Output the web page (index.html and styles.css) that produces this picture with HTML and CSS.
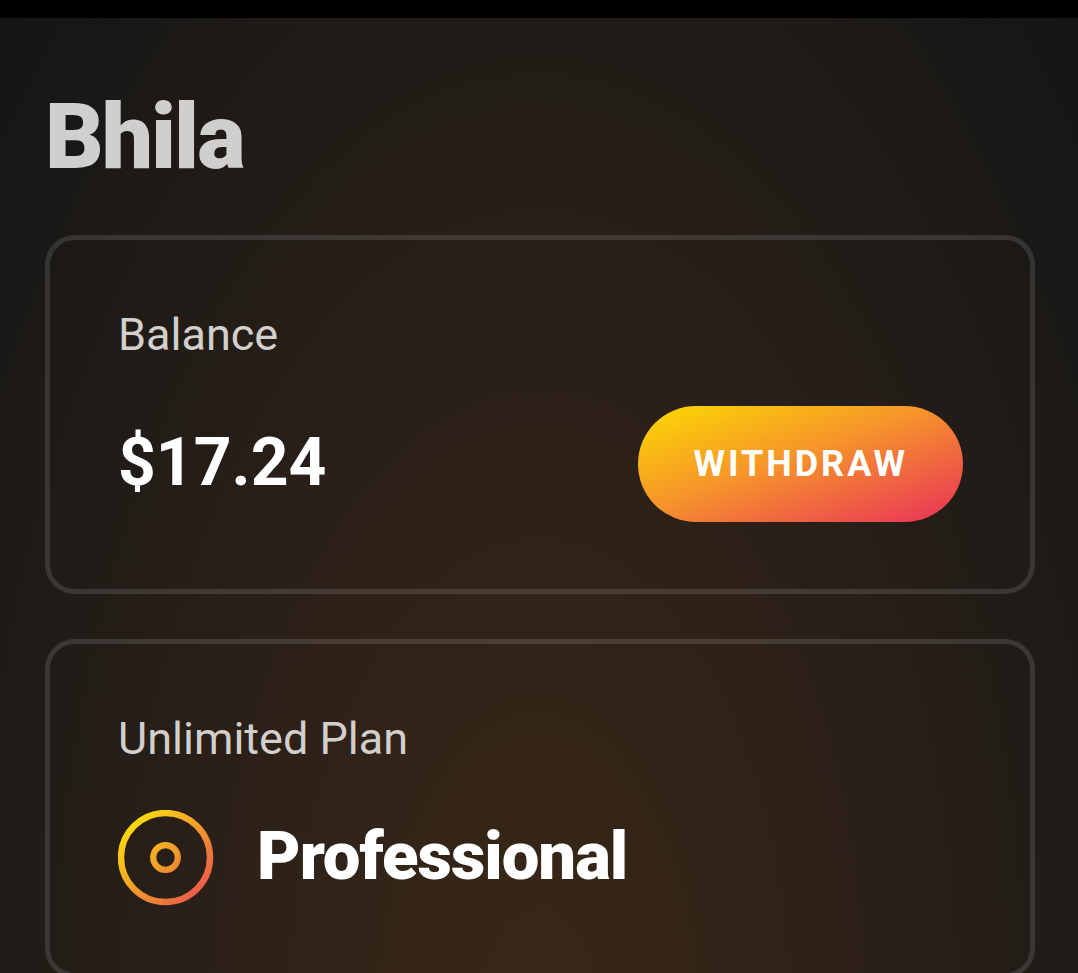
FILE: index.html
```html
<!DOCTYPE html>
<html lang="en">
<head>
    <meta charset="UTF-8">
    <meta name="viewport" content="width=device-width, initial-scale=1.0">
    <title>Bhila</title>
    <link rel="stylesheet" href="styles.css">
</head>
<body>

    <main class="dashboard">
        <h1 class="page-title">Bhila</h1>

        <section class="card">
            <h2 class="card-label">Balance</h2>
            <div class="balance-row">
                <p class="amount">$17.24</p>
                <button type="button" class="withdraw-button">Withdraw</button>
            </div>
        </section>

        <section class="card">
            <h2 class="card-label">Unlimited Plan</h2>
            <div class="plan-row">
                <svg class="plan-icon" viewBox="0 0 96 96" fill="none" aria-hidden="true">
                    <defs>
                        <linearGradient id="planGradient" gradientUnits="userSpaceOnUse" x1="10" y1="10" x2="90" y2="90">
                            <stop offset="0" stop-color="#fde00a"/>
                            <stop offset="0.5" stop-color="#f0992c"/>
                            <stop offset="1" stop-color="#ea4d50"/>
                        </linearGradient>
                    </defs>
                    <circle cx="47.5" cy="47.5" r="44.5" stroke="url(#planGradient)" stroke-width="6.4"/>
                    <circle cx="47.5" cy="47.5" r="12.3" stroke="url(#planGradient)" stroke-width="6.2"/>
                </svg>
                <p class="plan-name">Professional</p>
            </div>
        </section>
    </main>

</body>
</html>
```
FILE: styles.css
```css
* {
    margin: 0;
    padding: 0;
    box-sizing: border-box;
    font-family: Roboto, Arial, sans-serif;
}

body {
    background: #131415;
    min-height: 100vh;
    border-top: 18px solid #000;
    overflow: hidden;
}

.dashboard {
    min-height: calc(100vh - 18px);
    padding: 66px 43px 0 45px;
    background: radial-gradient(ellipse 65% 144% at 50% 106%, #3a2817 0%, #2b2018 48%, #1d1a17 84%, #131415 112%);
}

.page-title {
    font-size: 91px;
    font-weight: 900;
    line-height: 106px;
    letter-spacing: -2px;
    color: #d0cfce;
    margin-bottom: 45px;
}

.card {
    padding: 68px 67px 67px 68px;
    border: 5px solid rgba(255, 255, 255, 0.12);
    border-radius: 30px;
    margin-bottom: 45px;
}

.card-label {
    font-size: 45px;
    font-weight: 400;
    line-height: 54px;
    color: #d3cfcc;
    margin-bottom: 44px;
}

.balance-row {
    display: flex;
    align-items: center;
    justify-content: space-between;
}

.amount,
.plan-name {
    padding-bottom: 4px;
    color: #fff;
}

.amount {
    font-size: 66px;
    font-weight: 700;
}

.withdraw-button {
    height: 116px;
    padding: 0 55px;
    border: none;
    border-radius: 58px;
    background: linear-gradient(160deg, #fcdb00 0%, #f6952a 45%, #e9305a 100%);
    color: #fff;
    font-size: 36px;
    font-weight: 700;
    letter-spacing: 3px;
    text-transform: uppercase;
    cursor: pointer;
}

.plan-row {
    display: flex;
    align-items: center;
    gap: 43px;
}

.plan-icon {
    width: 96px;
    height: 96px;
}

.plan-name {
    font-size: 67px;
    font-weight: 900;
    letter-spacing: -1px;
}
```
